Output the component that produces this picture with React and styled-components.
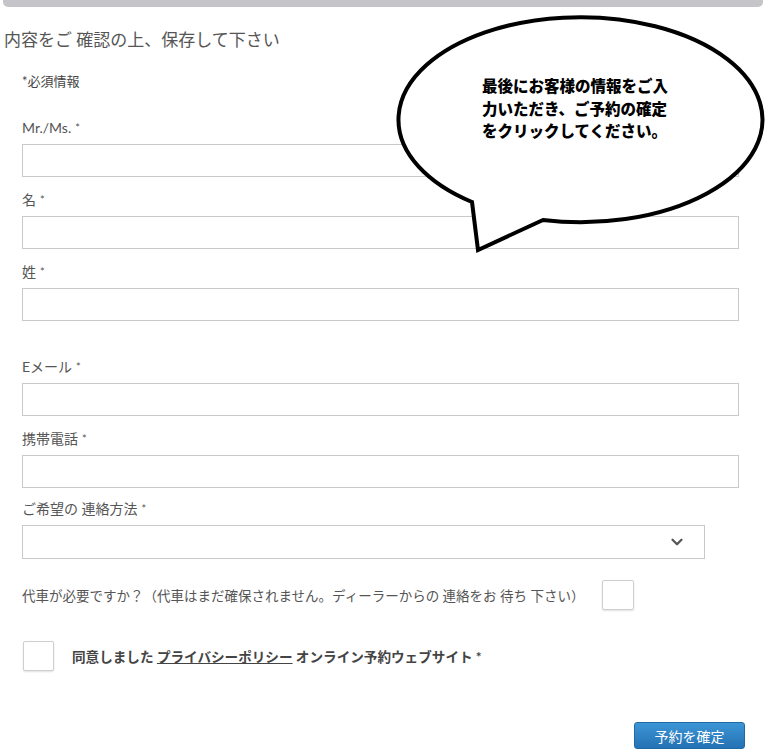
import React from 'react'
import styled, { createGlobalStyle } from 'styled-components'
import { ChevronDown } from 'lucide-react'

const GlobalStyle = createGlobalStyle`
  body {
    margin: 0;
    background: #fff;
    font-family: Lato, "Noto Sans CJK JP", sans-serif;
    color: #555;
  }
`

const Page = styled.div`
  position: relative;
  width: 782px;
  min-height: 755px;
`

const TopBar = styled.div`
  height: 7px;
  margin: 0 19px 0 3px;
  background: #c5c5c9;
  border-radius: 0 0 5px 5px;
`

const Heading = styled.h2`
  margin: 21px 0 0 4px;
  font-size: 17px;
  line-height: 24px;
  font-weight: 400;
  color: #555;
`

const Form = styled.form`
  padding: 0 43px 0 22px;
`

const Required = styled.div`
  margin-top: 21px;
  font-size: 13px;
  line-height: 16px;
  color: #444;
`

const Field = styled.div`
  margin-top: ${(p) => p.$gap}px;
`

const Label = styled.label`
  display: block;
  font-size: 14px;
  line-height: 16px;
  color: #555;
  margin-bottom: 8px;
`

const Star = styled.span`
  font-size: 11px;
  margin-left: 4px;
  vertical-align: top;
`

const Input = styled.input`
  display: block;
  box-sizing: border-box;
  width: 100%;
  height: 33px;
  border: 1px solid #c9c9c9;
  outline: none;
  background: #fff;
`

const SelectBox = styled.div`
  box-sizing: border-box;
  width: 683px;
  height: 34px;
  border: 1px solid #c9c9c9;
  display: flex;
  align-items: center;
  justify-content: flex-end;
  padding-right: 18px;
  color: #555;
`

const QuestionRow = styled.div`
  margin-top: 21px;
  display: flex;
  align-items: center;
  gap: 17px;
  font-size: 13.5px;
  color: #555;
`

const Check = styled.span`
  display: inline-block;
  box-sizing: border-box;
  width: ${(p) => p.$w}px;
  height: 30px;
  border: 1px solid #cfcfcf;
  border-radius: 2px;
  background: #fff;
  box-shadow: 0 1px 2px rgba(0, 0, 0, 0.12);
  flex-shrink: 0;
`

const AgreeRow = styled.div`
  margin-top: 31px;
  margin-left: 1px;
  display: flex;
  align-items: center;
  gap: 18px;
  font-size: 13.6px;
  font-weight: 700;
  color: #444;

  a {
    color: #444;
    text-decoration: underline;
  }
`

const ButtonRow = styled.div`
  margin-top: 51px;
  margin-right: -6px;
  display: flex;
  justify-content: flex-end;
`

const Submit = styled.button`
  width: 111px;
  height: 27px;
  border: 1px solid #1f6aa6;
  border-radius: 3px;
  background: linear-gradient(#3d95d6, #2472b3);
  color: #fff;
  font-family: "Noto Sans CJK JP", sans-serif;
  font-size: 14px;
  padding: 0;
`

const Bubble = styled.div`
  position: absolute;
  left: 396px;
  top: 15px;
  width: 370px;
  height: 240px;
`

const BubbleText = styled.p`
  position: absolute;
  left: 86px;
  top: 59px;
  margin: 0;
  font-family: "Noto Sans CJK JP", sans-serif;
  font-weight: 900;
  font-size: 15.5px;
  line-height: 22.5px;
  color: #000;
  white-space: nowrap;
`

const fields = [
  { label: 'Mr./Ms.', gap: 31 },
  { label: '名', gap: 15 },
  { label: '姓', gap: 15 },
  { label: 'Eメール', gap: 38 },
  { label: '携帯電話', gap: 15 },
]

export default function App() {
  return (
    <Page>
      <GlobalStyle />
      <TopBar />
      <Heading>内容をご 確認の上、保存して下さい</Heading>
      <Form>
        <Required>*必須情報</Required>
        {fields.map((f) => (
          <Field key={f.label} $gap={f.gap}>
            <Label>
              {f.label}
              <Star>*</Star>
            </Label>
            <Input type="text" />
          </Field>
        ))}
        <Field $gap={13}>
          <Label>
            ご希望の 連絡方法<Star>*</Star>
          </Label>
          <SelectBox>
            <ChevronDown size={18} strokeWidth={3} />
          </SelectBox>
        </Field>
        <QuestionRow>
          <span>代車が必要ですか？（代車はまだ確保されません。ディーラーからの 連絡をお 待ち 下さい）</span>
          <Check $w={32} />
        </QuestionRow>
        <AgreeRow>
          <Check $w={31} />
          <span>
            同意しました <a href="#">プライバシーポリシー</a> オンライン予約ウェブサイト *
          </span>
        </AgreeRow>
        <ButtonRow>
          <Submit type="button">予約を確定</Submit>
        </ButtonRow>
      </Form>
      <Bubble>
        <svg width="370" height="240" viewBox="0 0 370 240">
          <path
            d="M 76 187 A 182 102.5 0 1 1 147 205 L 82 235 Z"
            fill="#fff"
            stroke="#000"
            strokeWidth="4"
            strokeLinejoin="miter"
          />
        </svg>
        <BubbleText>
          最後にお客様の情報をご入
          <br />
          力いただき、ご予約の確定
          <br />
          をクリックしてください。
        </BubbleText>
      </Bubble>
    </Page>
  )
}
